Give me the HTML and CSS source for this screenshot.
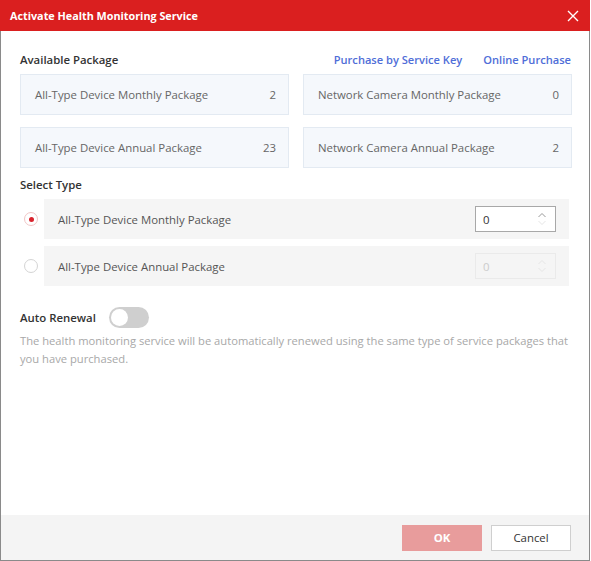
FILE: index.html
```html
<!DOCTYPE html>
<html>
<head>
<meta charset="utf-8">
<link rel="stylesheet" href="styles.css">
</head>
<body>
<div class="dialog">
  <div class="titlebar">
    <span class="title">Activate Health Monitoring Service</span>
    <svg class="close" width="12" height="12" viewBox="0 0 12 12"><path d="M1 1 L11 11 M11 1 L1 11" stroke="#fff" stroke-width="1.4" fill="none"/></svg>
  </div>
  <div class="body">
    <div class="section-head">
      <span class="label">Available Package</span>
      <div class="links">
        <a class="link">Purchase by Service Key</a>
        <a class="link">Online Purchase</a>
      </div>
    </div>
    <div class="cards">
      <div class="card"><span>All-Type Device Monthly Package</span><span>2</span></div>
      <div class="card"><span>Network Camera Monthly Package</span><span>0</span></div>
      <div class="card"><span>All-Type Device Annual Package</span><span>23</span></div>
      <div class="card"><span>Network Camera Annual Package</span><span>2</span></div>
    </div>
    <div class="label select-label">Select Type</div>
    <div class="options">
      <div class="option">
        <span class="radio checked"></span>
        <div class="opt-row">
          <span>All-Type Device Monthly Package</span>
          <div class="spinner">
            <span>0</span>
            <span class="arrows"><svg width="10" height="16" viewBox="0 0 10 16"><path d="M1.5 6 L5 2.5 L8.5 6" stroke="#999" stroke-width="1" fill="none"/><path d="M1.5 10 L5 13.5 L8.5 10" stroke="#e6e6e6" stroke-width="1" fill="none"/></svg></span>
          </div>
        </div>
      </div>
      <div class="option">
        <span class="radio"></span>
        <div class="opt-row">
          <span>All-Type Device Annual Package</span>
          <div class="spinner disabled">
            <span>0</span>
            <span class="arrows"><svg width="10" height="16" viewBox="0 0 10 16"><path d="M1.5 6 L5 2.5 L8.5 6" stroke="#e6e6e6" stroke-width="1" fill="none"/><path d="M1.5 10 L5 13.5 L8.5 10" stroke="#e6e6e6" stroke-width="1" fill="none"/></svg></span>
          </div>
        </div>
      </div>
    </div>
    <div class="renew">
      <span class="label">Auto Renewal</span>
      <span class="toggle"><span class="knob"></span></span>
    </div>
    <p class="desc">The health monitoring service will be automatically renewed using the same type of service packages that you have purchased.</p>
  </div>
  <div class="footer">
    <button class="btn ok">OK</button>
    <button class="btn cancel">Cancel</button>
  </div>
</div>
</body>
</html>
```
FILE: styles.css
```css
* { box-sizing: border-box; }
html, body { margin: 0; padding: 0; background: #fff; }
body { font-family: "Open Sans", "Noto Sans", sans-serif; font-size: 11.4px; color: #333; }

.dialog {
  width: 590px;
  height: 561px;
  border: 1px solid #8a8a8a;
  border-top: none;
  display: flex;
  flex-direction: column;
  background: #fff;
}
.titlebar {
  height: 31px;
  background: #da1f1f;
  display: flex;
  align-items: center;
  justify-content: space-between;
  padding: 0 10px 0 10px;
  margin: 0 -1px;
}
.title { color: #fff; font-weight: 700; font-size: 10.8px; }
.close { display: block; margin-right: 1px; }

.body { flex: 1; padding: 17px 18px 0 19px; }
.section-head { display: flex; justify-content: space-between; align-items: center; height: 22px; }
.label { font-weight: 600; color: #333; font-size: 11.4px; }
.links { display: flex; gap: 21px; }
.link { color: #4f6ed8; font-weight: 600; font-size: 11.1px; }

.cards {
  display: grid;
  grid-template-columns: 269px 269px;
  column-gap: 14px;
  row-gap: 12px;
  margin-top: 4px;
}
.card {
  height: 41px;
  background: #f5f8fc;
  border: 1px solid #e3eaf2;
  display: flex;
  align-items: center;
  justify-content: space-between;
  padding: 0 12px 0 14px;
  color: #666;
}
.select-label { margin-top: 9px; height: 16px; line-height: 16px; }
.options { margin-top: 6px; margin-right: 2px; display: flex; flex-direction: column; gap: 7px; }
.option { display: flex; align-items: center; }
.radio {
  width: 14px; height: 14px; border-radius: 50%;
  border: 1px solid #d4d4d4; background: #fff;
  margin-left: 4px; margin-right: 6px;
  display: flex; align-items: center; justify-content: center;
}
.radio.checked { border-color: #f0c6c6; }
.radio.checked::after { content: ""; width: 5px; height: 5px; border-radius: 50%; background: #d9232d; }
.opt-row {
  flex: 1;
  height: 40px;
  background: #f5f5f5;
  display: flex; align-items: center; justify-content: space-between;
  padding: 0 13px 0 14px;
  color: #555;
}
.spinner {
  width: 81px; height: 26px;
  border: 1px solid #a8a8a8; background: #fff;
  display: flex; align-items: center; justify-content: space-between;
  padding: 0 8px 0 7px; color: #333;
}
.spinner.disabled { border-color: #eaeaea; background: #f5f5f5; color: #ccc; }
.arrows { display: flex; }

.renew { display: flex; align-items: center; margin-top: 21px; gap: 13px; }
.toggle {
  width: 40px; height: 21px; border-radius: 11px; background: #cfcfcf;
  display: inline-flex; align-items: center; padding: 0 2px;
}
.knob { width: 17px; height: 17px; border-radius: 50%; background: #fff; }
.desc { margin: 4px 0 0 0; color: #a8a8a8; line-height: 18px; font-size: 11.2px; }

.footer {
  height: 45px;
  background: #f4f4f4;
  display: flex; justify-content: flex-end; align-items: center;
  gap: 9px; padding: 0 18px 0 0;
}
.btn {
  width: 80px; height: 26px; font-family: inherit; font-size: 11.4px; padding: 0;
}
.ok { background: #e89c9c; border: none; color: #fff; font-weight: 700; }
.cancel { background: #fff; border: 1px solid #cfcfcf; color: #333; }
```
